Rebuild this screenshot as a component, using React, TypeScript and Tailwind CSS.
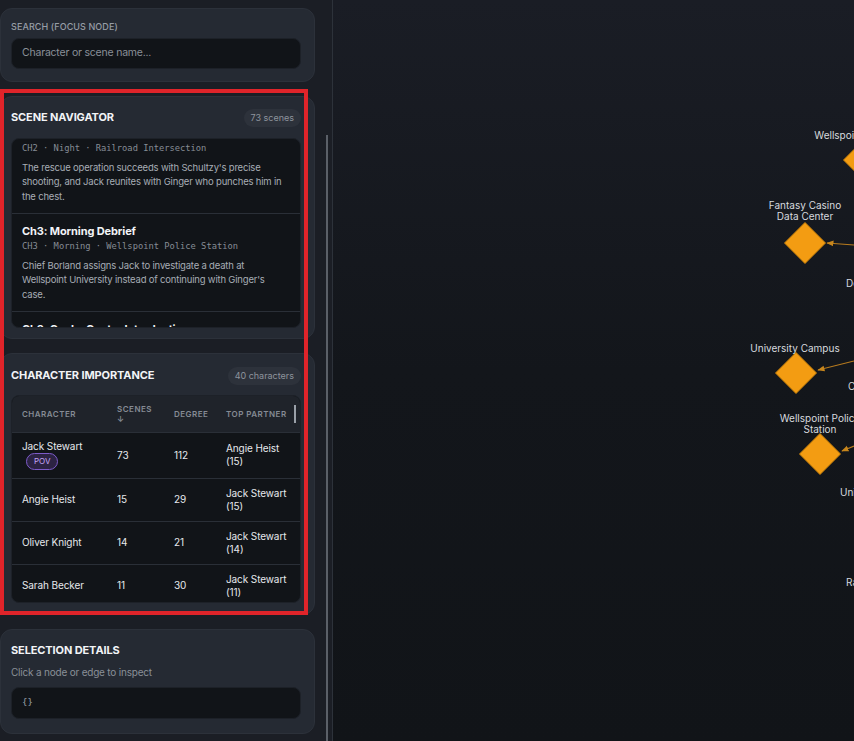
import React from "react";

const ui = { fontFamily: "Inter, 'Noto Sans', sans-serif" };
const mono = { fontFamily: "'DejaVu Sans Mono', 'Liberation Mono', monospace" };

const scenes = [
  {
    title: "Ch2: Rescue at the Railroad",
    meta: "CH2 · Night · Railroad Intersection",
    text: "The rescue operation succeeds with Schultzy's precise shooting, and Jack reunites with Ginger who punches him in the chest.",
  },
  {
    title: "Ch3: Morning Debrief",
    meta: "CH3 · Morning · Wellspoint Police Station",
    text: "Chief Borland assigns Jack to investigate a death at Wellspoint University instead of continuing with Ginger's case.",
  },
  {
    title: "Ch3: Cooke Center Introduction",
    meta: "CH3 · Day · Cooke Center",
    text: "Jack arrives at the Cooke Center and meets the staff.",
  },
];

const people = [
  { name: "Jack Stewart", pov: true, scenes: 73, degree: 112, partner: "Angie Heist", n: 15 },
  { name: "Angie Heist", scenes: 15, degree: 29, partner: "Jack Stewart", n: 15 },
  { name: "Oliver Knight", scenes: 14, degree: 21, partner: "Jack Stewart", n: 14 },
  { name: "Sarah Becker", scenes: 11, degree: 30, partner: "Jack Stewart", n: 11 },
];

const Card = ({ children, className }: { children: React.ReactNode; className?: string }) => (
  <div className={"rounded-xl border border-[#2c313a] bg-[#252a33] pl-[10px] pr-[13px] " + (className ?? "")}>
    {children}
  </div>
);

const CardHeader = ({ title, badge }: { title: string; badge: string }) => (
  <div className="flex h-[18px] items-center justify-between">
    <h2 className="text-[11px] font-bold tracking-[-0.01em] text-[#f2f4f7]">{title}</h2>
    <span className="rounded-full bg-[#2d323b] px-[7px] py-[3px] text-[9px] leading-[12px] text-[#8e949d]">
      {badge}
    </span>
  </div>
);

const Diamond = ({ x, y }: { x: number; y: number }) => (
  <polygon
    points={`${x},${y - 20.5} ${x + 20.5},${y} ${x},${y + 20.5} ${x - 20.5},${y}`}
    fill="#f39c12"
    stroke="#c98109"
    strokeWidth="1"
  />
);

const Label = ({ x, y, lines, anchor = "middle" }: { x: number; y: number; lines: string[]; anchor?: "middle" | "start" }) => (
  <text x={x} y={y} fill="#d7dadf" fontSize="10" textAnchor={anchor} style={ui}>
    {lines.map((l, i) => (
      <tspan key={l} x={x} dy={i === 0 ? 0 : 11}>
        {l}
      </tspan>
    ))}
  </text>
);

export default function App() {
  return (
    <div className="relative flex h-[741px] w-[854px] overflow-hidden bg-[#111418]" style={ui}>
      {/* sidebar */}
      <aside className="flex h-full w-[333px] shrink-0 border-r border-[#2d323a] bg-[#1b1e25]">
        <div className="flex w-[315px] shrink-0 flex-col gap-[14px] pt-2">
          <Card className="pb-[12px] pt-[11px]">
            <label className="block text-[9px] font-medium uppercase tracking-[0.01em] text-[#979da6]">
              Search (focus node)
            </label>
            <div className="mt-[4px] flex h-[31px] items-center rounded-lg border border-[#1d2128] bg-[#111418] px-[10px] text-[10.5px] tracking-[-0.02em] text-[#8a9098]">
              Character or scene name...
            </div>
          </Card>

          <Card className="h-[243px] pt-[12px]">
            <CardHeader title="SCENE NAVIGATOR" badge="73 scenes" />
            <div className="mt-[11px] h-[190px] overflow-hidden rounded-lg border border-[#1d2128] bg-[#111418]">
              <div className="-mt-[23px]">
                {scenes.map((s) => (
                  <div key={s.title} className="border-b border-[#2a2f37] px-[10px] pb-[8px] pt-[9px]">
                    <div className="text-[11px] font-bold leading-[16px] tracking-[-0.01em] text-[#f2f4f7]">{s.title}</div>
                    <div className="text-[8.75px] leading-[14px] text-[#868c95]" style={mono}>
                      {s.meta}
                    </div>
                    <p className="mt-[6px] text-[9.5px] leading-[14.7px] tracking-[-0.02em] text-[#a7adb5]">{s.text}</p>
                  </div>
                ))}
              </div>
            </div>
          </Card>

          <Card className="h-[262px] pt-[13px]">
            <CardHeader title="CHARACTER IMPORTANCE" badge="40 characters" />
            <div className="mt-[10px] h-[208px] overflow-hidden rounded-lg border border-[#1d2128] bg-[#111418]">
              <div className="grid h-[37px] grid-cols-[95px_57px_52px_1fr] items-center border-b border-[#2a2f37] bg-[#1f232a] pl-[10px] text-[8px] font-semibold uppercase tracking-[0.06em] text-[#858b94]">
                <div>Character</div>
                <div className="leading-[10px]">
                  Scenes
                  <br />↓
                </div>
                <div>Degree</div>
                <div className="flex items-center justify-between pr-[4px]">
                  <span>Top Partner</span>
                  <span className="h-[18px] w-[2px] bg-[#9aa0a8]" />
                </div>
              </div>
              {people.map((p) => (
                <div
                  key={p.name}
                  className={
                    "grid grid-cols-[95px_57px_52px_1fr] items-center border-b border-[#2a2f37] pl-[10px] text-[10px] leading-[13px] tracking-[-0.01em] text-[#e6e8ec] " +
                    (p.pov ? "h-[46px]" : "h-[43px]")
                  }
                >
                  <div>
                    <div>{p.name}</div>
                    {p.pov && (
                      <span className="ml-[4px] inline-block rounded-full border border-[#7d5bc9] bg-[#2c2343] px-[7px] text-[8px] leading-[15px] tracking-normal text-[#c4a6f6]">
                        POV
                      </span>
                    )}
                  </div>
                  <div>{p.scenes}</div>
                  <div>{p.degree}</div>
                  <div>
                    {p.partner}
                    <br />({p.n})
                  </div>
                </div>
              ))}
            </div>
          </Card>

          <Card className="pb-[14px] pt-[13px]">
            <h2 className="text-[11px] font-bold leading-[14px] tracking-[-0.01em] text-[#f2f4f7]">SELECTION DETAILS</h2>
            <p className="mt-[8px] text-[10px] leading-[14px] tracking-[-0.02em] text-[#8a9098]">Click a node or edge to inspect</p>
            <pre className="mt-[8px] flex h-[32px] items-center rounded-lg border border-[#1d2128] bg-[#111418] px-[10px] text-[9px] text-[#9ca2aa]" style={mono}>
              {"{}"}
            </pre>
          </Card>
        </div>
        <div className="ml-[11px] w-[2px]">
          <div className="mt-[135px] h-[606px] w-[2px] bg-[#5b6068]" />
        </div>
      </aside>

      {/* graph */}
      <main className="relative flex-1 bg-gradient-to-b from-[#1a1d25] via-[#13161b] to-[#111418]">
        <svg className="absolute inset-0" width="521" height="741">
          <defs>
            <marker id="arr" viewBox="0 0 10 10" refX="9" refY="5" markerWidth="6" markerHeight="6" orient="auto">
              <path d="M0,1 L10,5 L0,9 z" fill="#c7861c" />
            </marker>
          </defs>
          <line x1="521" y1="245" x2="494" y2="243" stroke="#b87b1e" strokeWidth="1.2" markerEnd="url(#arr)" />
          <line x1="521" y1="361" x2="485" y2="370" stroke="#b87b1e" strokeWidth="1.2" markerEnd="url(#arr)" />
          <line x1="521" y1="446" x2="509" y2="451" stroke="#b87b1e" strokeWidth="1.2" markerEnd="url(#arr)" />

          <Diamond x={531} y={160} />
          <Diamond x={472} y={243} />
          <Diamond x={463} y={373} />
          <Diamond x={487} y={454} />

          <Label x={531} y={139} lines={["Wellspoint University"]} />
          <Label x={472} y={209} lines={["Fantasy Casino", "Data Center"]} />
          <Label x={513} y={287} lines={["Downtown Wellspoint"]} anchor="start" />
          <Label x={462} y={352} lines={["University Campus"]} />
          <Label x={515} y={390} lines={["Cooke Center"]} anchor="start" />
          <Label x={487} y={422} lines={["Wellspoint Police", "Station"]} />
          <Label x={507} y={496} lines={["University Library"]} anchor="start" />
          <Label x={513} y={586} lines={["Railroad Intersection"]} anchor="start" />
        </svg>
      </main>

      {/* highlight */}
      <div className="pointer-events-none absolute left-0 top-[89px] h-[526px] w-[308px] border-4 border-[#e0242a]" />
    </div>
  );
}
